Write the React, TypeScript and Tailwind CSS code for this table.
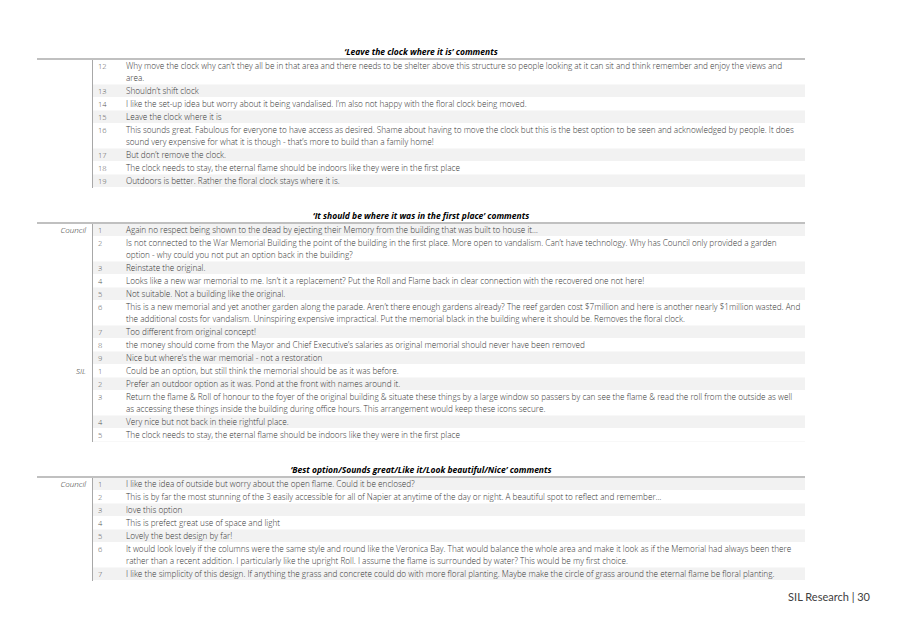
import React from "react";

type RowData = { n: string; lines: string[] };
type Group = { label: string; rows: RowData[] };
type Section = { title: string; startShaded: boolean; groups: Group[] };

const sections: Section[] = [
  {
    title: "‘Leave the clock where it is’ comments",
    startShaded: false,
    groups: [
      {
        label: "",
        rows: [
          {
            n: "12",
            lines: [
              "Why move the clock why can’t they all be in that area and there needs to be shelter above this structure so people looking at it can sit and think remember and enjoy the views and",
              "area.",
            ],
          },
          { n: "13", lines: ["Shouldn’t shift clock"] },
          { n: "14", lines: ["I like the set-up idea but worry about it being vandalised. I’m also not happy with the floral clock being moved."] },
          { n: "15", lines: ["Leave the clock where it is"] },
          {
            n: "16",
            lines: [
              "This sounds great. Fabulous for everyone to have access as desired. Shame about having to move the clock but this is the best option to be seen and acknowledged by people. It does",
              "sound very expensive for what it is though - that’s more to build than a family home!",
            ],
          },
          { n: "17", lines: ["But don’t remove the clock."] },
          { n: "18", lines: ["The clock needs to stay, the eternal flame should be indoors like they were in the first place"] },
          { n: "19", lines: ["Outdoors is better. Rather the floral clock stays where it is."] },
        ],
      },
    ],
  },
  {
    title: "‘It should be where it was in the first place’ comments",
    startShaded: true,
    groups: [
      {
        label: "Council",
        rows: [
          { n: "1", lines: ["Again no respect being shown to the dead by ejecting their Memory from the building that was built to house it…"] },
          {
            n: "2",
            lines: [
              "Is not connected to the War Memorial Building the point of the building in the first place. More open to vandalism. Can’t have technology. Why has Council only provided a garden",
              "option - why could you not put an option back in the building?",
            ],
          },
          { n: "3", lines: ["Reinstate the original."] },
          { n: "4", lines: ["Looks like a new war memorial to me. Isn’t it a replacement? Put the Roll and Flame back in clear connection with the recovered one not here!"] },
          { n: "5", lines: ["Not suitable. Not a building like the original."] },
          {
            n: "6",
            lines: [
              "This is a new memorial and yet another garden along the parade. Aren’t there enough gardens already? The reef garden cost $7million and here is another nearly $1million wasted. And",
              "the additional costs for vandalism. Uninspiring expensive impractical. Put the memorial black in the building where it should be. Removes the floral clock.",
            ],
          },
          { n: "7", lines: ["Too different from original concept!"] },
          { n: "8", lines: ["the money should come from the Mayor and Chief Executive’s salaries as original memorial should never have been removed"] },
          { n: "9", lines: ["Nice but where’s the war memorial - not a restoration"] },
        ],
      },
      {
        label: "SIL",
        rows: [
          { n: "1", lines: ["Could be an option, but still think the memorial should be as it was before."] },
          { n: "2", lines: ["Prefer an outdoor option as it was. Pond at the front with names around it."] },
          {
            n: "3",
            lines: [
              "Return the flame & Roll of honour to the foyer of the original building & situate these things by a large window so passers by can see the flame & read the roll from the outside as well",
              "as accessing these things inside the building during office hours. This arrangement would keep these icons secure.",
            ],
          },
          { n: "4", lines: ["Very nice but not back in theie rightful place."] },
          { n: "5", lines: ["The clock needs to stay, the eternal flame should be indoors like they were in the first place"] },
        ],
      },
    ],
  },
  {
    title: "‘Best option/Sounds great/Like it/Look beautiful/Nice’ comments",
    startShaded: true,
    groups: [
      {
        label: "Council",
        rows: [
          { n: "1", lines: ["I like the idea of outside but worry about the open flame. Could it be enclosed?"] },
          { n: "2", lines: ["This is by far the most stunning of the 3 easily accessible for all of Napier at anytime of the day or night. A beautiful spot to reflect and remember…"] },
          { n: "3", lines: ["love this option"] },
          { n: "4", lines: ["This is prefect great use of space and light"] },
          { n: "5", lines: ["Lovely the best design by far!"] },
          {
            n: "6",
            lines: [
              "It would look lovely if the columns were the same style and round like the Veronica Bay. That would balance the whole area and make it look as if the Memorial had always been there",
              "rather than a recent addition. I particularly like the upright Roll. I assume the flame is surrounded by water? This would be my first choice.",
            ],
          },
          { n: "7", lines: ["I like the simplicity of this design. If anything the grass and concrete could do with more floral planting. Maybe make the circle of grass around the eternal flame be floral planting."] },
        ],
      },
    ],
  },
];

function Row({ row, shaded }: { row: RowData; shaded: boolean }) {
  return (
    <div className={shaded ? "flex border-b border-white bg-[#f2f2f2]" : "flex border-b border-[#f8f8f8] bg-white"}>
      <div className="w-[33px] shrink-0 pl-[5px] text-[7.5px] leading-[12px] text-[#555555]">{row.n}</div>
      <div className="min-w-0 flex-1 text-[8.2px] leading-[12px] text-[#363636]">
        {row.lines.map((l, i) => (
          <div key={i} className="whitespace-nowrap">
            {l}
          </div>
        ))}
      </div>
    </div>
  );
}

function SectionView({ s, first }: { s: Section; first: boolean }) {
  let idx = 0;
  return (
    <div className={first ? "" : "mt-[22px]"}>
      <div className="text-center text-[8.5px] font-bold italic leading-[12px] text-black">{s.title}</div>
      <div className="h-[2px] bg-[#c0c0c0]" />
      {s.groups.map((g, gi) => (
        <div key={gi} className="flex">
          <div className="w-[55px] shrink-0 pr-[6px] text-right text-[8px] italic leading-[12px] text-[#2e2e2e]">
            {g.label}
          </div>
          <div className="flex-1 border-l border-[#a8a8a8]">
            {g.rows.map((r, ri) => {
              const shaded = s.startShaded ? idx % 2 === 0 : idx % 2 === 1;
              idx++;
              return <Row key={ri} row={r} shaded={shaded} />;
            })}
          </div>
        </div>
      ))}
    </div>
  );
}

export default function App() {
  return (
    <div
      className="h-[635px] w-[906px] overflow-hidden bg-white font-light"
      style={{ fontFamily: '"Open Sans", "Noto Sans", sans-serif' }}
    >
      <div className="ml-[37px] w-[768px] pt-[46px]">
        {sections.map((s, i) => (
          <SectionView key={i} s={s} first={i === 0} />
        ))}
      </div>
      <div className="mt-[8px] flex justify-end pr-[36px]">
        <span className="text-[11px] font-normal text-[#404040]" style={{ fontFamily: "Lato, sans-serif" }}>
          SIL Research | 30
        </span>
      </div>
    </div>
  );
}
